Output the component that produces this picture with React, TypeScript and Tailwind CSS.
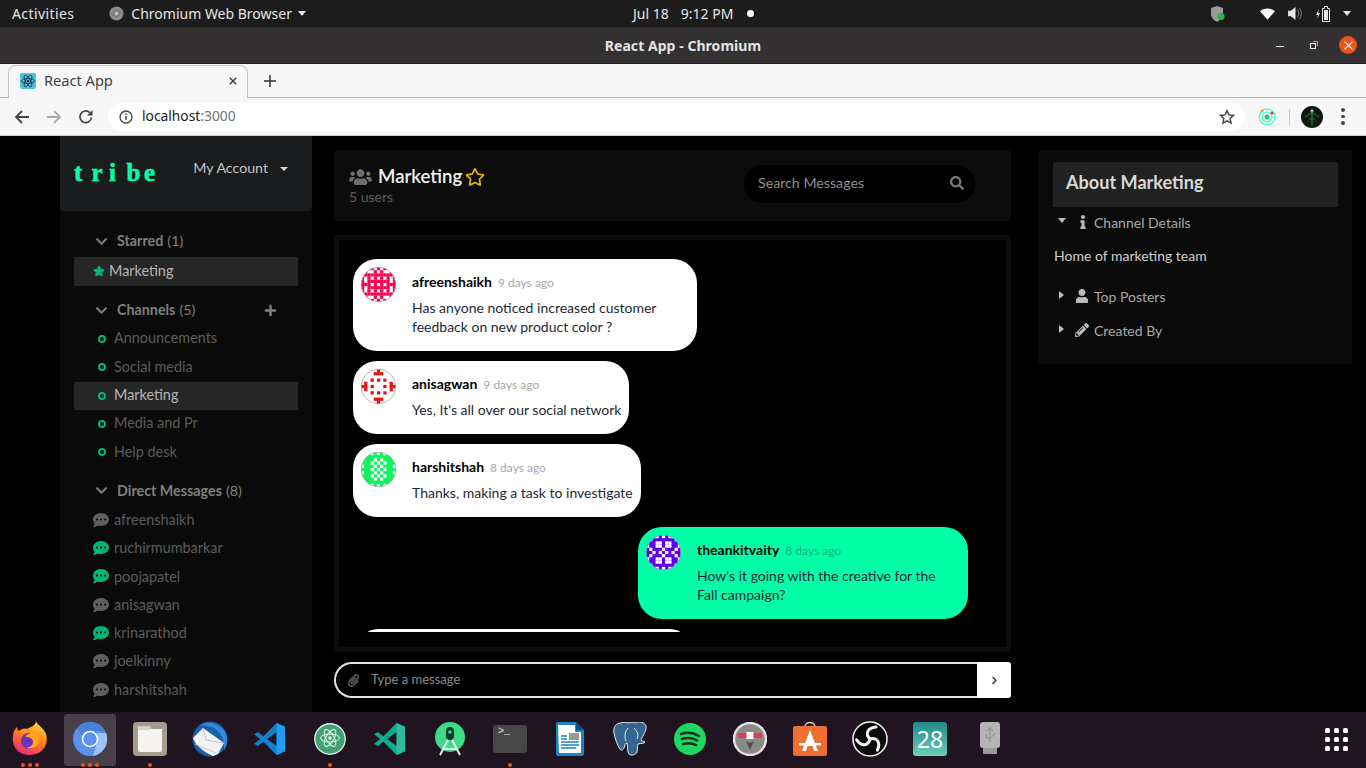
import React from "react";
import {
  FaChevronDown, FaChevronRight, FaCommentDots, FaInfo, FaPaperclip, FaPencilAlt, FaPlus,
  FaRegStar, FaSearch, FaStar, FaUser, FaUsers,
} from "react-icons/fa";

const lato = "font-['Lato','Liberation_Sans',sans-serif]";

const quads: { base: string; ink: string; rows: string[] }[] = [
  { base: "#ffffff", ink: "#f5004e", rows: ["...x.x", ".x..x.", ".xxxxx", "x.x.x.", "x.xxxx", "xxx.x."] },
  { base: "#ffffff", ink: "#e80f0f", rows: ["xx...x", "x...xx", "......", "...x.x", ".x....", "xx.x.."] },
  { base: "#0cf55a", ink: "#ffffff", rows: ["...x.x", "......", "x...x.", "...x.x", "x...x.", "...x.x"] },
  { base: "#5c00ea", ink: "#ffffff", rows: ["..xx.x", ".x....", "x..xx.", "x..xx.", ".x...x", "..x.x."] },
];

function Identicon({ variant }: { variant: number }) {
  const { base, ink, rows } = quads[variant];
  const n = 11;
  const mid = 5;
  const cell = 35 / n;
  const cells: React.ReactNode[] = [];
  for (let y = 0; y < n; y++) {
    for (let x = 0; x < n; x++) {
      const r = rows[y <= mid ? y : n - 1 - y];
      const c = r[x <= mid ? x : n - 1 - x];
      if (c === "x") cells.push(<rect key={x + "-" + y} x={x * cell} y={y * cell} width={cell + 0.05} height={cell + 0.05} fill={ink} />);
    }
  }
  return (
    <svg viewBox="0 0 35 35" className="w-[35px] h-[35px] shrink-0">
      <defs>
        <clipPath id={"av" + variant}>
          <circle cx="17.5" cy="17.5" r="17.2" />
        </clipPath>
      </defs>
      <g clipPath={"url(#av" + variant + ")"}>
        <rect width="35" height="35" fill={base} />
        {cells}
      </g>
      <circle cx="17.5" cy="17.5" r="17.2" fill="none" stroke="#999" strokeWidth="0.7" />
    </svg>
  );
}

function Bubble({ name, time, lines, variant, own, width }: { name: string; time: string; lines: string[]; variant: number; own?: boolean; width: string }) {
  return (
    <div className={`flex shrink-0 rounded-[24px] pt-[8px] pl-[8px] pb-[15px] ${width} ${own ? "bg-[#00ffa7] self-end mr-[38px]" : "bg-white"}`}>
      <Identicon variant={variant} />
      <div className="ml-[16px] pt-[5px]">
        <div className="flex items-baseline h-[20px]">
          <span className="text-[14px] font-bold text-black leading-[20px]">{name}</span>
          <span className={`ml-[6px] text-[12px] leading-[20px] ${own ? "text-[#00b577]" : "text-[#a8a8a8]"}`}>{time}</span>
        </div>
        <div className="mt-[6px] text-[14px] leading-[19px] text-[#1f2933]">
          {lines.map((l) => (
            <div key={l} className="whitespace-nowrap">{l}</div>
          ))}
        </div>
      </div>
    </div>
  );
}

function SectionHead({ label, count, plus }: { label: string; count: string; plus?: boolean }) {
  return (
    <div className="flex items-center h-[28px] pl-[35px] pr-[35px] text-[#7f7f7f] text-[14.3px]">
      <FaChevronDown className="w-[13px] h-[13px] mr-[9px] text-[#7d7d7d]" />
      <span className="font-bold">{label}</span>
      <span className="ml-[4px]">{count}</span>
      {plus ? <FaPlus className="ml-auto w-[13px] h-[13px] text-[#808080]" /> : null}
    </div>
  );
}

function Channel({ label, active }: { label: string; active?: boolean }) {
  return (
    <div className={`flex items-center h-[28.3px] mx-[14px] pl-[24px] pb-[2px] text-[14.4px] ${active ? "bg-[#262626] text-[#b5b5b5]" : "text-[#5c5c5c]"}`}>
      <span className="w-[8px] h-[8px] rounded-full border-2 border-[#00b577] mr-[8px] mt-[2px]" />
      {label}
    </div>
  );
}

function Dm({ label, on }: { label: string; on?: boolean }) {
  return (
    <div className="flex items-center h-[28.33px] pl-[33px] text-[14.4px] text-[#5c5c5c]">
      <FaCommentDots className={`w-[16px] h-[16px] mr-[5px] ${on ? "text-[#00b577]" : "text-[#5f5f5f]"}`} />
      {label}
    </div>
  );
}

function DockSlot({ children, dots = 0, active }: { children: React.ReactNode; dots?: number; active?: boolean }) {
  return (
    <div className="relative w-[60px] h-[56px] flex items-center justify-center shrink-0">
      {active ? <div className="absolute left-[4px] top-[2px] w-[52px] h-[52px] rounded-[3px] bg-[#4a404a]" /> : null}
      <div className="relative -mt-[3px]">{children}</div>
      {dots > 0 ? (
        <div className="absolute bottom-[1px] left-0 right-0 flex justify-center gap-[3px]">
          {Array.from({ length: dots }).map((_, i) => (
            <span key={i} className="w-[4px] h-[4px] rounded-full bg-[#e95420]" />
          ))}
        </div>
      ) : null}
    </div>
  );
}

const Dock = () => (
  <div className="h-[56px] bg-[#1f1420] flex items-center shrink-0">
    <DockSlot dots={3}>
      <svg viewBox="0 0 36 36" className="w-[36px] h-[36px]">
        <defs>
          <linearGradient id="ff" x1="0.8" y1="0" x2="0.3" y2="1">
            <stop offset="0" stopColor="#ffe13a" />
            <stop offset="0.5" stopColor="#ff7a1a" />
            <stop offset="1" stopColor="#ee2a7a" />
          </linearGradient>
        </defs>
        <path d="M24 0c1 4 8 7 10 13 2 7 0 14-6 18-6 4-15 4-21 0C2 27 0 21 1 14c0-3 2-6 4-8 0 2 1 3 2 4 2-2 5-3 8-2 3-2 9-3 9-8z" fill="url(#ff)" />
        <circle cx="17" cy="20" r="8" fill="#6b33b8" />
        <path d="M7 14c4-4 9-4 13-2-3 0-6 2-6 4 4 0 7 2 7 5 0 3-3 6-7 5 4 3 11 1 13-5 0-7-6-12-13-11-3 0-5 2-7 4z" fill="#ffa31f" />
      </svg>
    </DockSlot>
    <DockSlot dots={3} active>
      <svg viewBox="0 0 34 34" className="w-[34px] h-[34px]">
        <circle cx="17" cy="17" r="17" fill="#5a92ee" />
        <path d="M17 0a17 17 0 0 1 15 9H17a8 8 0 0 0-8 4L4 6a17 17 0 0 1 13-6z" fill="#4a80dd" />
        <path d="M25 17a8 8 0 0 0-2-6h10a17 17 0 0 1-13 23z" fill="#a0c3f7" />
        <circle cx="17" cy="17" r="7.5" fill="#5a92ee" stroke="#fff" strokeWidth="1.6" />
      </svg>
    </DockSlot>
    <DockSlot dots={1}>
      <svg viewBox="0 0 34 34" className="w-[34px] h-[34px]">
        <rect width="34" height="34" rx="4" fill="#a49e8d" />
        <path d="M5 6a2 2 0 0 1 2-2h9l2 3h10a1 1 0 0 1 1 1v20a2 2 0 0 1-2 2H7a2 2 0 0 1-2-2z" fill="#f5f3ef" />
        <rect x="5" y="4" width="12" height="4" rx="1" fill="#d5d1c7" />
      </svg>
    </DockSlot>
    <DockSlot>
      <svg viewBox="0 0 36 36" className="w-[36px] h-[36px]">
        <circle cx="18" cy="18" r="17.5" fill="#1c5fa8" />
        <path d="M9 4c8-5 20-1 25 9 2 6 1 12-2 16 1-9-3-18-10-22-4-2-9-2-13-3z" fill="#2f8ae0" />
        <path d="M1 17l10-10 21 15-6 11-5 2C12 31 4 25 1 17z" fill="#f2f2f2" />
        <path d="M11 7l3 12 17 3" stroke="#bdbdbd" strokeWidth="1" fill="none" />
        <path d="M3 23l21 9" stroke="#c9c9c9" strokeWidth="1" fill="none" />
      </svg>
    </DockSlot>
    <DockSlot>
      <svg viewBox="0 0 34 34" className="w-[32px] h-[32px]">
        <path fillRule="evenodd" d="M24 0L10 14 4 9.500 0 12l6.500 5L0 22l4 2.500L10 20l14 14 9-4V4zM24 9.500v15L14 17z" fill="#0f7fd0" />
        <path d="M24 0l9 4v26l-9 4z" fill="#1f9cf0" />
      </svg>
    </DockSlot>
    <DockSlot dots={1}>
      <svg viewBox="0 0 32 32" className="w-[32px] h-[32px]">
        <circle cx="16" cy="16" r="15.200" fill="#3fa373" stroke="#e4e4e4" strokeWidth="1.400" />
        <g fill="none" stroke="#e8f3ec" strokeWidth="1">
          <ellipse cx="16" cy="15" rx="9.500" ry="4" transform="rotate(60 16 15)" />
          <ellipse cx="16" cy="15" rx="9.500" ry="4" transform="rotate(-60 16 15)" />
          <ellipse cx="16" cy="15" rx="9.500" ry="4" />
        </g>
        <circle cx="16" cy="15" r="1.800" fill="#e8f3ec" />
      </svg>
    </DockSlot>
    <DockSlot>
      <svg viewBox="0 0 34 34" className="w-[32px] h-[32px]">
        <path fillRule="evenodd" d="M24 0L10 14 4 9.500 0 12l6.500 5L0 22l4 2.500L10 20l14 14 9-4V4zM24 9.500v15L14 17z" fill="#10a98c" />
        <path d="M24 0l9 4v26l-9 4z" fill="#2dbb9e" />
      </svg>
    </DockSlot>
    <DockSlot>
      <svg viewBox="0 0 32 34" className="w-[32px] h-[34px]">
        <circle cx="16" cy="15" r="15" fill="#3ddc84" />
        <rect x="12" y="5" width="8" height="13" rx="4" fill="#0c3b2e" />
        <circle cx="16" cy="10" r="1.800" fill="#3ddc84" />
        <path d="M14 18L6 33M18 18l8 15M9 27h14" stroke="#e8eef0" strokeWidth="2" fill="none" />
      </svg>
    </DockSlot>
    <DockSlot dots={1}>
      <div className="w-[34px] h-[28px] rounded-[3px] bg-[#474747] pl-[5px] text-[#e8e8e8] text-[10px] leading-[14px] font-['Liberation_Mono',monospace]">&gt;_</div>
    </DockSlot>
    <DockSlot>
      <svg viewBox="0 0 28 34" className="w-[28px] h-[34px]">
        <path d="M2 0h18l8 8v24a2 2 0 0 1-2 2H2a2 2 0 0 1-2-2V2a2 2 0 0 1 2-2z" fill="#1a86c4" />
        <path d="M2 3h17v7h6v21H3z" fill="#fff" />
        <path d="M20 0l8 8h-8z" fill="#0d4f75" />
        <rect x="13" y="11" width="10" height="7" fill="#9a9a8a" />
        <path d="M5 14h6M5 17h6M5 20h18M5 23h18M5 26h15" stroke="#1a86c4" strokeWidth="1.500" />
      </svg>
    </DockSlot>
    <DockSlot>
      <svg viewBox="0 0 34 34" className="w-[34px] h-[34px]">
        <path d="M8 1c-5 0-8 4-7 10 1 5 3 12 6 16 1 2 3 1 4-1 1-3 1-5 3-5 1 4 0 9 2 11 2 2 7 1 8-2 1-3 0-7 1-8 3-1 6 0 7-2-1-1-3 0-4-2 2-5 6-10 5-14-1-4-7-5-11-3-2-1-4-1-6 0-3-1-5-1-8 0z" fill="#336791" stroke="#e8e8e8" strokeWidth="1" />
        <path d="M15 6c-3 3-4 9-2 13M21 6c3 3 5 6 3 11" stroke="#e8e8e8" strokeWidth="1" fill="none" />
      </svg>
    </DockSlot>
    <DockSlot>
      <svg viewBox="0 0 32 32" className="w-[32px] h-[32px]">
        <circle cx="16" cy="16" r="16" fill="#1ed760" />
        <path d="M7 11c6-2 13-1 18 2M8 16c5-1.500 11-1 15 1.500M9 21c4-1 9-1 13 1" stroke="#15301f" strokeWidth="2.500" strokeLinecap="round" fill="none" />
      </svg>
    </DockSlot>
    <DockSlot>
      <svg viewBox="0 0 34 34" className="w-[34px] h-[34px]">
        <circle cx="17" cy="17" r="16" fill="#8a8a86" stroke="#e2e2e2" strokeWidth="2.500" />
        <path d="M17 21l-4-2 4 9 4-9z" fill="#4f4f4f" />
        <path d="M5 11h24v5H5z" fill="#e8374f" />
        <rect x="13.500" y="10" width="7" height="7" fill="#fff" />
      </svg>
    </DockSlot>
    <DockSlot>
      <svg viewBox="0 0 34 36" className="w-[34px] h-[36px]">
        <path d="M12 6c0-6 10-6 10 0" stroke="#e6c9a0" strokeWidth="1.500" fill="none" />
        <rect y="5" width="34" height="30" rx="2" fill="#ef6f33" />
        <path d="M17 9l-8 21h4l1.500-5h5l1.500 5h4z" fill="#fff" />
        <rect x="6" y="22" width="22" height="2.500" fill="#fff" />
      </svg>
    </DockSlot>
    <DockSlot>
      <svg viewBox="0 0 36 36" className="w-[36px] h-[36px]">
        <circle cx="18" cy="18" r="17" fill="#0a0a0a" stroke="#f4f4f4" strokeWidth="1.500" />
        <g fill="none" stroke="#f4f4f4" strokeWidth="3" strokeLinecap="round">
          <path d="M18 18C13 13 15 7 24 6" />
          <path d="M18 18C13 13 15 7 24 6" transform="rotate(120 18 18)" />
          <path d="M18 18C13 13 15 7 24 6" transform="rotate(240 18 18)" />
        </g>
      </svg>
    </DockSlot>
    <DockSlot>
      <div className="relative w-[34px] h-[34px] rounded-[3px] bg-gradient-to-b from-[#23888a] to-[#67d0ba] text-white text-[23px] leading-[34px] text-center font-['Noto_Sans',sans-serif]">28</div>
    </DockSlot>
    <DockSlot>
      <svg viewBox="0 0 22 34" className="w-[22px] h-[34px]">
        <rect x="1" y="0" width="20" height="26" rx="3" fill="#b5b5b5" />
        <rect x="4" y="26" width="14" height="6" fill="#9a9a9a" />
        <path d="M11 5v15M8 9l3-3 3 3M7 12v3l4 2M15 11v2l-4 3" stroke="#8a8a8a" strokeWidth="1" fill="none" />
      </svg>
    </DockSlot>
    <div className="ml-auto mr-[18px] grid grid-cols-3 gap-[4px] -mt-[1px]">
      {Array.from({ length: 9 }).map((_, i) => (
        <span key={i} className="w-[5px] h-[5px] rounded-[1.500px] bg-white" />
      ))}
    </div>
  </div>
);

export default function App() {
  return (
    <div className="w-[1366px] h-[768px] overflow-hidden flex flex-col bg-black font-['Noto_Sans',sans-serif]">
      {/* GNOME top bar */}
      <div className="h-[27px] bg-[#1c1c1c] text-[#e6e6e6] text-[14px] flex items-center shrink-0 relative">
        <span className="ml-[12px] tracking-[0.4px]">Activities</span>
        <svg viewBox="0 0 16 16" className="ml-[35px] w-[15px] h-[15px]">
          <circle cx="8" cy="8" r="7.500" fill="#8b8b8b" />
          <circle cx="8" cy="8" r="3" fill="#bdbdbd" stroke="#555" strokeWidth="1" />
        </svg>
        <span className="ml-[7px]">Chromium Web Browser</span>
        <span className="ml-[6px] w-0 h-0 border-x-[4.500px] border-x-transparent border-t-[5px] border-t-[#e6e6e6]" />
        <div className="absolute left-[633px] top-0 h-[27px] flex items-center">
          <span>Jul 18</span>
          <span className="ml-[12px]">9:12 PM</span>
          <span className="ml-[14px] w-[7px] h-[7px] rounded-full bg-white" />
        </div>
        <div className="ml-auto flex items-center text-[#e6e6e6]">
          <svg viewBox="0 0 14 16" className="w-[14px] h-[16px] mr-[35px]">
            <path d="M6 0l6 2v6c0 4-3 6-6 8-3-2-6-4-6-8V2z" fill="#9a9a9a" />
            <circle cx="10" cy="10.500" r="3.500" fill="#34b04a" />
          </svg>
          <svg viewBox="0 0 16 12" className="w-[15px] h-[12px] mr-[13px]">
            <path d="M0 3c4-4 12-4 16 0l-8 9z" fill="#fff" />
          </svg>
          <svg viewBox="0 0 16 14" className="w-[15px] h-[13px] mr-[13px]">
            <path d="M0 4h3l5-4v14l-5-4H0z" fill="#e6e6e6" />
            <path d="M10 3c2 2 2 6 0 8M12 1c3 3 3 9 0 12" stroke="#888" strokeWidth="1" fill="none" />
          </svg>
          <svg viewBox="0 0 15 16" className="w-[15px] h-[16px] mr-[12px]">
            <path d="M3 3L0 9h2l-1 4 3-6H2z" fill="#e6e6e6" />
            <path d="M6.500 2.500h2V0.500h3v2h2v13h-7z" fill="none" stroke="#e6e6e6" strokeWidth="1" />
            <rect x="8" y="4" width="4" height="10" fill="#e6e6e6" />
          </svg>
          <span className="mr-[15px] w-0 h-0 border-x-[4.500px] border-x-transparent border-t-[5px] border-t-[#e6e6e6]" />
        </div>
      </div>

      {/* Window title bar */}
      <div className="h-[37px] bg-[#333132] border-b border-[#1d1d1d] text-[14px] font-bold text-[#e4e4e4] flex items-center justify-center relative shrink-0">
        <span className="tracking-[0.05px]">React App - Chromium</span>
        <div className="absolute right-[9px] top-[9px] flex items-center">
          <span className="w-[8px] h-[1px] bg-white mr-[26px] mt-[2px]" />
          <span className="relative w-[8px] h-[8px] mr-[21px]">
            <span className="absolute left-0 bottom-0 w-[6px] h-[6px] border border-white" />
            <span className="absolute right-0 top-0 w-[5px] h-[5px] border-t border-r border-[#aaa]" />
          </span>
          <span className="w-[18px] h-[18px] rounded-full bg-[#e95420] flex items-center justify-center">
            <svg viewBox="0 0 8 8" className="w-[9px] h-[9px]"><path d="M0.500 0.500l7 7M7.500 0.500l-7 7" stroke="#fff" strokeWidth="1" /></svg>
          </span>
        </div>
      </div>

      {/* Tab strip */}
      <div className="h-[34px] bg-[#f7f7f7] border-b border-[#b9b9b9] flex items-end shrink-0 relative">
        <div className="ml-[8px] w-[240px] h-[33px] -mb-px bg-[#f7f7f7] border-t border-x border-[#c4c4c4] rounded-t-[8px] flex items-center pl-[11px] pr-[10px] pb-[2px]">
          <span className="w-[16px] h-[16px] rounded-[2px] bg-[#53c1de] flex items-center justify-center">
            <svg viewBox="0 0 16 16" className="w-[16px] h-[16px]">
              <g fill="none" stroke="#12333c" strokeWidth="0.800">
                <ellipse cx="8" cy="8" rx="6.500" ry="2.500" />
                <ellipse cx="8" cy="8" rx="6.500" ry="2.500" transform="rotate(60 8 8)" />
                <ellipse cx="8" cy="8" rx="6.500" ry="2.500" transform="rotate(-60 8 8)" />
              </g>
              <circle cx="8" cy="8" r="1.300" fill="#12333c" />
            </svg>
          </span>
          <span className="ml-[8px] text-[14.6px] text-[#3c4043]">React App</span>
          <svg viewBox="0 0 10 10" className="ml-auto w-[8px] h-[8px]"><path d="M1 1l8 8M9 1l-8 8" stroke="#333" strokeWidth="1.600" /></svg>
        </div>
        <svg viewBox="0 0 12 12" className="ml-[16px] mb-[10px] w-[12px] h-[12px]"><path d="M6 0v12M0 6h12" stroke="#333" strokeWidth="1.500" /></svg>
      </div>

      {/* Toolbar */}
      <div className="h-[38px] bg-[#f7f7f7] border-b border-[#cfcfcf] flex items-center shrink-0">
        <svg viewBox="0 0 16 16" className="ml-[14px] w-[16px] h-[16px]"><path d="M15 8H2M8 2L2 8l6 6" stroke="#444" strokeWidth="1.800" fill="none" /></svg>
        <svg viewBox="0 0 16 16" className="ml-[16px] w-[16px] h-[16px]"><path d="M1 8h13M8 2l6 6-6 6" stroke="#aaa" strokeWidth="1.800" fill="none" /></svg>
        <svg viewBox="0 0 16 16" className="ml-[16px] w-[16px] h-[16px]"><path d="M13.500 8.500A5.800 5.800 0 1 1 11.800 3.600" stroke="#444" strokeWidth="1.700" fill="none" /><path d="M14.500 1v5.500H9z" fill="#444" /></svg>
        <div className="ml-[14px] w-[1137px] h-[28px] bg-white rounded-full flex items-center pl-[11px] pr-[10px]">
          <svg viewBox="0 0 14 14" className="w-[14px] h-[14px]"><circle cx="7" cy="7" r="6" stroke="#444" strokeWidth="1.300" fill="none" /><path d="M7 6v4M7 3.500v1.500" stroke="#444" strokeWidth="1.400" /></svg>
          <span className="ml-[9px] mb-[1px] text-[13.8px] text-[#202124]">localhost<span className="text-[#6d7278]">:3000</span></span>
          <svg viewBox="0 0 24 24" className="ml-auto w-[16px] h-[16px]"><path d="M12 2.500l2.900 6.300 6.900.8-5.100 4.700 1.400 6.800-6.100-3.400-6.100 3.400 1.400-6.800L2.200 9.600l6.900-.8z" fill="none" stroke="#444" strokeWidth="2.200" /></svg>
        </div>
        <svg viewBox="0 0 18 18" className="ml-[13px] w-[18px] h-[18px]">
          <circle cx="9" cy="9" r="7.800" fill="none" stroke="#3dffd0" strokeWidth="1.200" />
          <circle cx="9" cy="9" r="5" fill="none" stroke="#3dffd0" strokeWidth="1.200" />
          <circle cx="9" cy="9" r="2.500" fill="#1ed07a" />
          <circle cx="4" cy="3" r="1.500" fill="#f59a3c" />
          <circle cx="14" cy="5" r="1.500" fill="#e8352e" />
        </svg>
        <span className="ml-[13px] w-px h-[16px] bg-[#c9c9c9]" />
        <svg viewBox="0 0 22 22" className="ml-[11px] w-[22px] h-[22px]">
          <circle cx="11" cy="11" r="11" fill="#0c1a12" />
          <path d="M11 3v16M7 8h8M8 13h6M4 10h3M15 10h3" stroke="#2f7a48" strokeWidth="1.200" />
          <circle cx="11" cy="5" r="1.500" fill="#9cc8a8" />
        </svg>
        <div className="ml-[18px] flex flex-col gap-[3px]">
          <span className="w-[3.500px] h-[3.500px] rounded-full bg-[#444]" />
          <span className="w-[3.500px] h-[3.500px] rounded-full bg-[#444]" />
          <span className="w-[3.500px] h-[3.500px] rounded-full bg-[#444]" />
        </div>
      </div>

      {/* Page */}
      <div className={`flex-1 min-h-0 overflow-hidden bg-black flex pl-[60px] ${lato}`}>
        {/* Sidebar */}
        <div className="w-[252px] shrink-0 bg-[#0a0a0a] flex flex-col">
          <div className="h-[75px] bg-[#1b1c1d] rounded-b-[4px] flex items-start shrink-0">
            <div className="mt-[22px] ml-[14px] flex text-[25px] leading-[30px] font-bold text-[#00ffa7] [-webkit-text-stroke:0.6px_#00ffa7] font-['Liberation_Serif',serif]">
              {["t", "r", "i", "b", "e"].map((c) => (
                <span key={c} className="w-[17.500px]">{c}</span>
              ))}
            </div>
            <span className="mt-[23px] ml-auto text-[14.2px] leading-[18px] text-[#c4c4c4]">My Account</span>
            <span className="mt-[31px] ml-[12px] mr-[24px] w-0 h-0 border-x-[4px] border-x-transparent border-t-[4px] border-t-[#d4d4d4]" />
          </div>
          <div className="mt-[16px]"><SectionHead label="Starred" count="(1)" /></div>
          <div className="flex items-center h-[29px] mt-[2px] mx-[14px] pl-[19px] pb-[2px] bg-[#262626] text-[14.4px] text-[#b5b5b5] shrink-0">
            <FaStar className="w-[12px] h-[12px] text-[#00b577] mr-[4px]" />
            Marketing
          </div>
          <div className="mt-[10px]"><SectionHead label="Channels" count="(5)" plus /></div>
          <div className="mt-[1px]">
            <Channel label="Announcements" />
            <Channel label="Social media" />
            <Channel label="Marketing" active />
            <Channel label="Media and Pr" />
            <Channel label="Help desk" />
          </div>
          <div className="mt-[10px]"><SectionHead label="Direct Messages" count="(8)" /></div>
          <div className="mt-[1px]">
            <Dm label="afreenshaikh" />
            <Dm label="ruchirmumbarkar" on />
            <Dm label="poojapatel" on />
            <Dm label="anisagwan" />
            <Dm label="krinarathod" on />
            <Dm label="joelkinny" />
            <Dm label="harshitshah" />
          </div>
        </div>

        {/* Main column */}
        <div className="ml-[22px] w-[677px] shrink-0 flex flex-col">
          <div className="mt-[14px] h-[71px] bg-[#0c0c0c] rounded-[4px] flex items-start shrink-0">
            <div className="ml-[15px] mt-[14px]">
              <div className="flex items-center h-[25px]">
                <FaUsers className="w-[23px] h-[18px] text-[#6e6e6e]" />
                <span className="ml-[6px] text-[18.6px] leading-[25px] font-semibold text-[#f0f0f0]">Marketing</span>
                <FaRegStar className="ml-[3px] w-[20px] h-[20px] text-[#e5b40b]" />
              </div>
              <div className="-mt-[1px] text-[14px] leading-[18px] text-[#5c5c5c]">5 users</div>
            </div>
            <div className="ml-auto mr-[36px] mt-[15px] w-[231px] h-[38px] rounded-full bg-black flex items-center pl-[14px] pr-[11px] pb-[2px]">
              <span className="text-[14.2px] text-[#8f8f8f] -mt-[1px]">Search Messages</span>
              <FaSearch className="ml-auto w-[14px] h-[14px] text-[#7a7a7a]" />
            </div>
          </div>

          <div className="mt-[14px] h-[417px] border-[5px] border-[#0c0c0c] rounded-[3px] bg-black shrink-0 pt-[19px] pl-[14px]">
            <div className="h-[373px] overflow-hidden flex flex-col gap-[10px]">
              <Bubble name="afreenshaikh" time="9 days ago" lines={["Has anyone noticed increased customer", "feedback on new product color ?"]} variant={0} width="w-[344px]" />
              <Bubble name="anisagwan" time="9 days ago" lines={["Yes, It's all over our social network"]} variant={1} width="w-[276px]" />
              <Bubble name="harshitshah" time="8 days ago" lines={["Thanks, making a task to investigate"]} variant={2} width="w-[288px]" />
              <Bubble name="theankitvaity" time="8 days ago" lines={["How's it going with the creative for the", "Fall campaign?"]} variant={3} own width="w-[330px]" />
              <div className="ml-[5px] w-[332px] h-[40px] shrink-0 bg-white rounded-[24px]" />
            </div>
          </div>

          <div className="mt-[10px] h-[36px] flex shrink-0">
            <div className="flex-1 border-2 border-r-0 border-[#e2e2e2] rounded-l-full bg-black flex items-center pl-[11px]">
              <FaPaperclip className="w-[13px] h-[13px] text-[#555]" />
              <span className="ml-[11px] text-[13px] text-[#8a8a8a]">Type a message</span>
            </div>
            <div className="w-[34px] bg-white rounded-r-[3px] flex items-center justify-center">
              <FaChevronRight className="w-[9px] h-[9px] text-[#333]" />
            </div>
          </div>
        </div>

        {/* About panel */}
        <div className="ml-[27px] mt-[14px] w-[314px] h-[214px] bg-[#0a0a0a] rounded-[4px] shrink-0 pt-[12px] pl-[15px] pr-[14px] text-[14px] text-[#a8a8a8]">
          <div className="h-[45px] bg-[#222222] rounded-t-[3px] pl-[13px] pb-[4px] flex items-center text-[18.1px] font-bold text-[#d8d8d8]">About Marketing</div>
          <div className="flex items-center h-[32px] -mt-[1px]">
            <span className="ml-[5px] w-0 h-0 border-x-[4.500px] border-x-transparent border-t-[5px] border-t-[#bbb] -mt-[3px]" />
            <FaInfo className="ml-[12px] w-[10px] h-[14px] text-[#bbb]" />
            <span className="ml-[6px]">Channel Details</span>
          </div>
          <div className="mt-[8px] ml-[1px] text-[14px] text-[#d2d2d2] leading-[20px]">Home of marketing team</div>
          <div className="mt-[13px] flex items-center h-[34px]">
            <span className="ml-[6px] w-0 h-0 border-y-[4.500px] border-y-transparent border-l-[5px] border-l-[#bbb] -mt-[2px]" />
            <FaUser className="ml-[11px] w-[14px] h-[14px] text-[#bbb]" />
            <span className="ml-[5px]">Top Posters</span>
          </div>
          <div className="flex items-center h-[34px]">
            <span className="ml-[6px] w-0 h-0 border-y-[4.500px] border-y-transparent border-l-[5px] border-l-[#bbb] -mt-[2px]" />
            <FaPencilAlt className="ml-[11px] w-[14px] h-[14px] text-[#bbb]" />
            <span className="ml-[5px]">Created By</span>
          </div>
        </div>
      </div>

      <Dock />
    </div>
  );
}
